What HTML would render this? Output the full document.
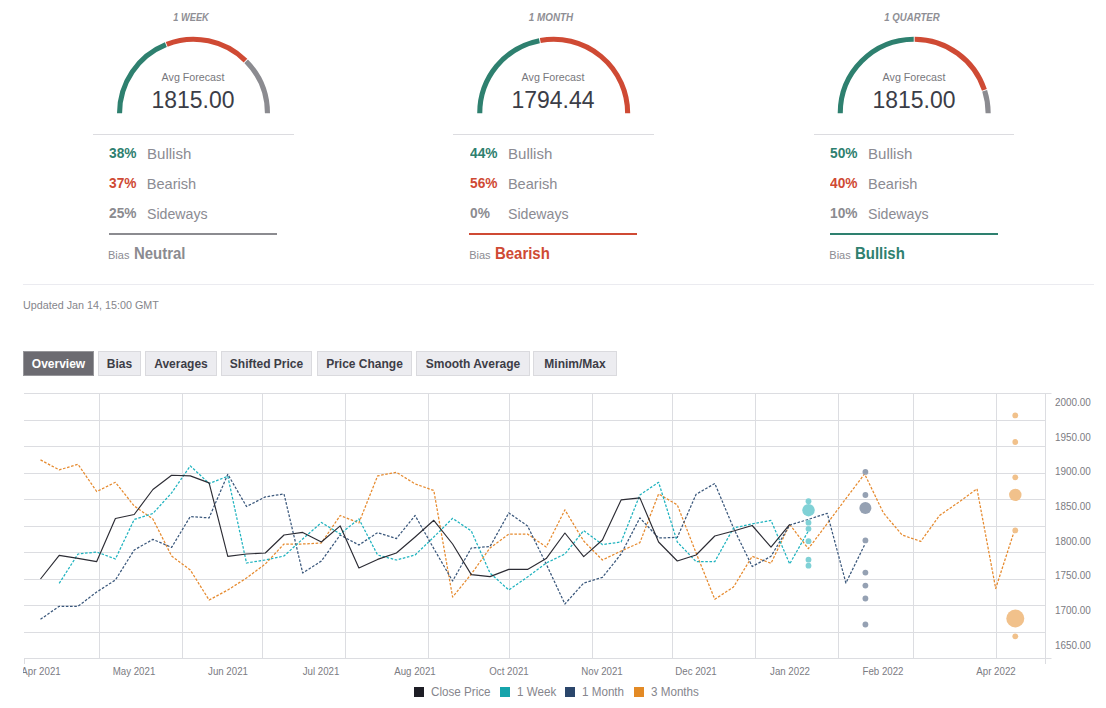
<!DOCTYPE html><html><head><meta charset="utf-8"><style>
html,body{margin:0;padding:0;background:#fff;}
body{width:1106px;height:708px;overflow:hidden;position:relative;font-family:"Liberation Sans", sans-serif;}
.t{position:absolute;white-space:nowrap;line-height:1;}
</style></head><body>
<svg width="1106" height="708" style="position:absolute;left:0;top:0"><path d="M119.55,113.20 A73.95,73.95 0 0 1 165.86,44.61" fill="none" stroke="#2e806f" stroke-width="5.1"/><path d="M166.70,44.28 A73.95,73.95 0 0 1 245.47,60.59" fill="none" stroke="#cf4a34" stroke-width="5.1"/><path d="M246.11,61.23 A73.95,73.95 0 0 1 267.45,113.20" fill="none" stroke="#8b8b90" stroke-width="5.1"/><path d="M479.75,113.20 A73.95,73.95 0 0 1 539.40,40.65" fill="none" stroke="#2e806f" stroke-width="5.1"/><path d="M540.29,40.48 A73.95,73.95 0 0 1 627.65,113.20" fill="none" stroke="#cf4a34" stroke-width="5.1"/><path d="M840.25,113.20 A73.95,73.95 0 0 1 913.75,39.25" fill="none" stroke="#2e806f" stroke-width="5.1"/><path d="M914.65,39.25 A73.95,73.95 0 0 1 984.39,89.92" fill="none" stroke="#cf4a34" stroke-width="5.1"/><path d="M984.67,90.78 A73.95,73.95 0 0 1 988.15,113.20" fill="none" stroke="#8b8b90" stroke-width="5.1"/></svg>
<div class="t" style="left:90.8px;width:200px;text-align:center;top:12.6px;font-size:10.3px;font-style:italic;font-weight:bold;color:#8f8f95;transform:scaleX(0.9)">1 WEEK</div>
<div class="t" style="left:93.1px;width:200px;text-align:center;top:72.3px;font-size:10.8px;color:#77777c;transform:scaleX(0.99)">Avg Forecast</div>
<div class="t" style="left:93.1px;width:200px;text-align:center;top:87.7px;font-size:24.4px;color:#3b3d47;transform:scaleX(0.94)">1815.00</div>
<div style="position:absolute;left:93.0px;top:134px;width:200.5px;height:1px;background:#dcdce0"></div>
<div class="t" style="left:108.9px;top:146.2px;font-size:14.6px;font-weight:bold;color:#2e806f;transform:scaleX(0.94);transform-origin:0 0">38%</div>
<div class="t" style="left:146.7px;top:146.5px;font-size:14.6px;color:#8b8b92;transform:scaleX(1.03);transform-origin:0 0">Bullish</div>
<div class="t" style="left:108.9px;top:176.2px;font-size:14.6px;font-weight:bold;color:#cf4a34;transform:scaleX(0.94);transform-origin:0 0">37%</div>
<div class="t" style="left:146.7px;top:176.5px;font-size:14.6px;color:#8b8b92;transform:scaleX(1.0);transform-origin:0 0">Bearish</div>
<div class="t" style="left:108.9px;top:206.2px;font-size:14.6px;font-weight:bold;color:#8b8b90;transform:scaleX(0.94);transform-origin:0 0">25%</div>
<div class="t" style="left:146.7px;top:206.5px;font-size:14.6px;color:#8b8b92;transform:scaleX(0.97);transform-origin:0 0">Sideways</div>
<div style="position:absolute;left:109.0px;top:233px;width:168px;height:2px;background:#8b8b90"></div>
<div class="t" style="left:108.0px;top:250px;font-size:11px;color:#8b8b92">Bias</div>
<div class="t" style="left:133.5px;top:245.7px;font-size:16.6px;font-weight:bold;color:#8b8b90;transform:scaleX(0.9);transform-origin:0 0">Neutral</div>
<div class="t" style="left:451.00000000000006px;width:200px;text-align:center;top:12.6px;font-size:10.3px;font-style:italic;font-weight:bold;color:#8f8f95;transform:scaleX(0.955)">1 MONTH</div>
<div class="t" style="left:453.30000000000007px;width:200px;text-align:center;top:72.3px;font-size:10.8px;color:#77777c;transform:scaleX(0.99)">Avg Forecast</div>
<div class="t" style="left:453.30000000000007px;width:200px;text-align:center;top:87.7px;font-size:24.4px;color:#3b3d47;transform:scaleX(0.94)">1794.44</div>
<div style="position:absolute;left:453.20000000000005px;top:134px;width:200.5px;height:1px;background:#dcdce0"></div>
<div class="t" style="left:470.1px;top:146.2px;font-size:14.6px;font-weight:bold;color:#2e806f;transform:scaleX(0.94);transform-origin:0 0">44%</div>
<div class="t" style="left:507.90000000000003px;top:146.5px;font-size:14.6px;color:#8b8b92;transform:scaleX(1.03);transform-origin:0 0">Bullish</div>
<div class="t" style="left:470.1px;top:176.2px;font-size:14.6px;font-weight:bold;color:#cf4a34;transform:scaleX(0.94);transform-origin:0 0">56%</div>
<div class="t" style="left:507.90000000000003px;top:176.5px;font-size:14.6px;color:#8b8b92;transform:scaleX(1.0);transform-origin:0 0">Bearish</div>
<div class="t" style="left:470.1px;top:206.2px;font-size:14.6px;font-weight:bold;color:#8b8b90;transform:scaleX(0.94);transform-origin:0 0">0%</div>
<div class="t" style="left:507.90000000000003px;top:206.5px;font-size:14.6px;color:#8b8b92;transform:scaleX(0.97);transform-origin:0 0">Sideways</div>
<div style="position:absolute;left:469.20000000000005px;top:233px;width:168px;height:2px;background:#cf4a34"></div>
<div class="t" style="left:469.20000000000005px;top:250px;font-size:11px;color:#8b8b92">Bias</div>
<div class="t" style="left:494.70000000000005px;top:245.7px;font-size:16.6px;font-weight:bold;color:#cf4a34;transform:scaleX(0.9);transform-origin:0 0">Bearish</div>
<div class="t" style="left:811.5px;width:200px;text-align:center;top:12.6px;font-size:10.3px;font-style:italic;font-weight:bold;color:#8f8f95;transform:scaleX(0.935)">1 QUARTER</div>
<div class="t" style="left:813.8000000000001px;width:200px;text-align:center;top:72.3px;font-size:10.8px;color:#77777c;transform:scaleX(0.99)">Avg Forecast</div>
<div class="t" style="left:813.8000000000001px;width:200px;text-align:center;top:87.7px;font-size:24.4px;color:#3b3d47;transform:scaleX(0.94)">1815.00</div>
<div style="position:absolute;left:813.7px;top:134px;width:200.5px;height:1px;background:#dcdce0"></div>
<div class="t" style="left:830.2px;top:146.2px;font-size:14.6px;font-weight:bold;color:#2e806f;transform:scaleX(0.94);transform-origin:0 0">50%</div>
<div class="t" style="left:868.0000000000001px;top:146.5px;font-size:14.6px;color:#8b8b92;transform:scaleX(1.03);transform-origin:0 0">Bullish</div>
<div class="t" style="left:830.2px;top:176.2px;font-size:14.6px;font-weight:bold;color:#cf4a34;transform:scaleX(0.94);transform-origin:0 0">40%</div>
<div class="t" style="left:868.0000000000001px;top:176.5px;font-size:14.6px;color:#8b8b92;transform:scaleX(1.0);transform-origin:0 0">Bearish</div>
<div class="t" style="left:830.2px;top:206.2px;font-size:14.6px;font-weight:bold;color:#8b8b90;transform:scaleX(0.94);transform-origin:0 0">10%</div>
<div class="t" style="left:868.0000000000001px;top:206.5px;font-size:14.6px;color:#8b8b92;transform:scaleX(0.97);transform-origin:0 0">Sideways</div>
<div style="position:absolute;left:829.7px;top:233px;width:168px;height:2px;background:#2e806f"></div>
<div class="t" style="left:829.3000000000001px;top:250px;font-size:11px;color:#8b8b92">Bias</div>
<div class="t" style="left:854.8000000000001px;top:245.7px;font-size:16.6px;font-weight:bold;color:#2e806f;transform:scaleX(0.9);transform-origin:0 0">Bullish</div>
<div style="position:absolute;left:23px;top:284px;width:1071px;height:1px;background:#ebebf0"></div>
<div class="t" style="left:23px;top:300.05px;font-size:10.5px;color:#85858b;transform:scaleX(1.025);transform-origin:0 0">Updated Jan 14, 15:00 GMT</div>
<div style="position:absolute;left:23px;top:351px;width:69px;height:23px;background:#6c6b71;border:1px solid #96969a;color:#fff;box-sizing:content-box;font-size:12px;font-weight:bold;text-align:center;line-height:25px;white-space:nowrap">Overview</div>
<div style="position:absolute;left:98px;top:351px;width:41px;height:23px;background:#ececf0;border:1px solid #dadade;color:#3d3d47;box-sizing:content-box;font-size:12px;font-weight:bold;text-align:center;line-height:25px;white-space:nowrap">Bias</div>
<div style="position:absolute;left:145px;top:351px;width:70px;height:23px;background:#ececf0;border:1px solid #dadade;color:#3d3d47;box-sizing:content-box;font-size:12px;font-weight:bold;text-align:center;line-height:25px;white-space:nowrap">Averages</div>
<div style="position:absolute;left:221px;top:351px;width:89px;height:23px;background:#ececf0;border:1px solid #dadade;color:#3d3d47;box-sizing:content-box;font-size:12px;font-weight:bold;text-align:center;line-height:25px;white-space:nowrap">Shifted Price</div>
<div style="position:absolute;left:317px;top:351px;width:93px;height:23px;background:#ececf0;border:1px solid #dadade;color:#3d3d47;box-sizing:content-box;font-size:12px;font-weight:bold;text-align:center;line-height:25px;white-space:nowrap">Price Change</div>
<div style="position:absolute;left:416px;top:351px;width:112px;height:23px;background:#ececf0;border:1px solid #dadade;color:#3d3d47;box-sizing:content-box;font-size:12px;font-weight:bold;text-align:center;line-height:25px;white-space:nowrap">Smooth Average</div>
<div style="position:absolute;left:533px;top:351px;width:82px;height:23px;background:#ececf0;border:1px solid #dadade;color:#3d3d47;box-sizing:content-box;font-size:12px;font-weight:bold;text-align:center;line-height:25px;white-space:nowrap">Minim/Max</div>
<svg width="1106" height="708" style="position:absolute;left:0;top:0"><line x1="24" y1="393.5" x2="1051.5" y2="393.5" stroke="#dcdde1" stroke-width="1"/><line x1="24" y1="420.5" x2="1045.5" y2="420.5" stroke="#dcdde1" stroke-width="1"/><line x1="24" y1="446.5" x2="1045.5" y2="446.5" stroke="#dcdde1" stroke-width="1"/><line x1="24" y1="473.5" x2="1045.5" y2="473.5" stroke="#dcdde1" stroke-width="1"/><line x1="24" y1="499.5" x2="1045.5" y2="499.5" stroke="#dcdde1" stroke-width="1"/><line x1="24" y1="526.5" x2="1045.5" y2="526.5" stroke="#dcdde1" stroke-width="1"/><line x1="24" y1="552.5" x2="1045.5" y2="552.5" stroke="#dcdde1" stroke-width="1"/><line x1="24" y1="579.5" x2="1045.5" y2="579.5" stroke="#dcdde1" stroke-width="1"/><line x1="24" y1="605.5" x2="1045.5" y2="605.5" stroke="#dcdde1" stroke-width="1"/><line x1="24" y1="632.5" x2="1045.5" y2="632.5" stroke="#dcdde1" stroke-width="1"/><line x1="24" y1="658.5" x2="1051.5" y2="658.5" stroke="#dcdde1" stroke-width="1"/><line x1="99.5" y1="393" x2="99.5" y2="658" stroke="#dcdde1" stroke-width="1"/><line x1="182.5" y1="393" x2="182.5" y2="658" stroke="#dcdde1" stroke-width="1"/><line x1="262.5" y1="393" x2="262.5" y2="658" stroke="#dcdde1" stroke-width="1"/><line x1="345.5" y1="393" x2="345.5" y2="658" stroke="#dcdde1" stroke-width="1"/><line x1="428.5" y1="393" x2="428.5" y2="658" stroke="#dcdde1" stroke-width="1"/><line x1="509.5" y1="393" x2="509.5" y2="658" stroke="#dcdde1" stroke-width="1"/><line x1="592.5" y1="393" x2="592.5" y2="658" stroke="#dcdde1" stroke-width="1"/><line x1="672.5" y1="393" x2="672.5" y2="658" stroke="#dcdde1" stroke-width="1"/><line x1="755.5" y1="393" x2="755.5" y2="658" stroke="#dcdde1" stroke-width="1"/><line x1="838.5" y1="393" x2="838.5" y2="658" stroke="#dcdde1" stroke-width="1"/><line x1="913.5" y1="393" x2="913.5" y2="658" stroke="#dcdde1" stroke-width="1"/><line x1="996.5" y1="393" x2="996.5" y2="658" stroke="#dcdde1" stroke-width="1"/><line x1="1045.5" y1="393" x2="1045.5" y2="664" stroke="#dcdde1" stroke-width="1"/><line x1="24.5" y1="658" x2="24.5" y2="664" stroke="#dcdde1" stroke-width="1"/><polyline points="40.5,459.9 59.2,469.9 78.0,464.3 96.7,491.5 115.4,482.3 134.2,506.0 152.9,519.0 171.6,556.0 190.3,570.0 209.1,600.0 227.8,590.0 246.5,578.0 265.3,564.0 284.0,544.0 302.7,544.0 321.4,543.0 340.2,515.5 358.9,522.9 377.6,475.9 396.4,472.3 415.1,483.9 433.8,490.5 452.6,597.0 471.3,574.0 490.0,548.0 508.8,534.0 527.5,534.0 546.2,547.0 564.9,509.9 583.7,541.0 602.4,560.0 621.1,551.0 639.9,542.6 658.6,493.9 677.3,504.9 696.1,553.0 714.8,599.3 733.5,587.0 752.2,556.3 771.0,563.3 789.7,524.5 808.4,548.7 827.2,523.6 845.9,498.6 864.6,473.9 883.4,512.9 902.1,535.0 920.8,541.4 939.5,515.5 958.3,502.5 977.0,488.9 995.7,588.5 1014.5,530.4" fill="none" stroke="#e68a2e" stroke-width="1.25" stroke-dasharray="2.6 1.6" stroke-linejoin="round"/><polyline points="40.5,619.3 59.2,606.3 78.0,606.3 96.7,592.0 115.4,580.0 134.2,550.0 152.9,539.4 171.6,547.4 190.3,516.5 209.1,517.9 227.8,474.3 246.5,506.5 265.3,496.9 284.0,493.9 302.7,573.0 321.4,561.0 340.2,535.0 358.9,545.0 377.6,532.6 396.4,538.6 415.1,515.5 433.8,548.6 452.6,581.0 471.3,548.0 490.0,546.6 508.8,512.9 527.5,525.9 546.2,564.0 564.9,604.0 583.7,583.0 602.4,577.4 621.1,554.0 639.9,517.9 658.6,538.0 677.3,537.4 696.1,494.3 714.8,483.5 733.5,528.0 752.2,566.5 771.0,556.3 789.7,525.1 808.4,519.4 827.2,513.3 845.9,583.0 864.6,544.9" fill="none" stroke="#3b587c" stroke-width="1.25" stroke-dasharray="2.6 1.6" stroke-linejoin="round"/><polyline points="59.2,583.4 78.0,554.0 96.7,552.0 115.4,559.0 134.2,519.5 152.9,513.5 171.6,492.9 190.3,465.9 209.1,483.5 227.8,476.3 246.5,563.0 265.3,560.0 284.0,556.0 302.7,539.0 321.4,522.5 340.2,534.0 358.9,518.9 377.6,555.0 396.4,560.0 415.1,555.0 433.8,537.0 452.6,518.3 471.3,531.0 490.0,573.0 508.8,590.0 527.5,577.0 546.2,563.0 564.9,554.0 583.7,530.6 602.4,544.6 621.1,542.0 639.9,494.9 658.6,482.3 677.3,542.0 696.1,561.6 714.8,561.6 733.5,528.0 752.2,523.9 771.0,520.4 789.7,563.9 808.4,530.9" fill="none" stroke="#1fb3bf" stroke-width="1.25" stroke-dasharray="2.6 1.6" stroke-linejoin="round"/><polyline points="40.5,579.0 59.2,555.4 78.0,558.4 96.7,561.6 115.4,518.5 134.2,514.5 152.9,489.5 171.6,475.3 190.3,475.9 209.1,482.9 227.8,556.4 246.5,554.0 265.3,553.0 284.0,535.0 302.7,532.4 321.4,542.0 340.2,525.9 358.9,568.0 377.6,559.4 396.4,553.0 415.1,537.0 433.8,520.3 452.6,544.0 471.3,574.6 490.0,576.6 508.8,569.4 527.5,569.4 546.2,558.6 564.9,533.0 583.7,556.6 602.4,540.0 621.1,499.9 639.9,497.9 658.6,542.0 677.3,561.0 696.1,555.0 714.8,536.0 733.5,531.0 752.2,525.5 771.0,547.1 789.7,524.3" fill="none" stroke="#2c2c34" stroke-width="1.15" stroke-linejoin="round"/><circle cx="808.5" cy="501.2" r="2.9" fill="#80d1d6"/><circle cx="808.5" cy="510.2" r="6.2" fill="#80d1d6"/><circle cx="808.5" cy="522.7" r="2.9" fill="#80d1d6"/><circle cx="808.5" cy="528.8" r="2.9" fill="#80d1d6"/><circle cx="808.5" cy="541.2" r="2.9" fill="#80d1d6"/><circle cx="808.5" cy="559.7" r="2.9" fill="#80d1d6"/><circle cx="808.5" cy="565.7" r="2.9" fill="#80d1d6"/><circle cx="865.4" cy="471.9" r="2.9" fill="#95a1b3"/><circle cx="865.4" cy="495" r="2.9" fill="#95a1b3"/><circle cx="865.4" cy="508" r="6.0" fill="#95a1b3"/><circle cx="865.4" cy="540.4" r="2.9" fill="#95a1b3"/><circle cx="865.4" cy="572.6" r="2.9" fill="#95a1b3"/><circle cx="865.4" cy="585.6" r="2.9" fill="#95a1b3"/><circle cx="865.4" cy="598.5" r="2.9" fill="#95a1b3"/><circle cx="865.4" cy="624.5" r="2.9" fill="#95a1b3"/><circle cx="1015.3" cy="415.4" r="2.9" fill="#f1c18b"/><circle cx="1015.3" cy="442" r="2.9" fill="#f1c18b"/><circle cx="1015.3" cy="477.3" r="2.9" fill="#f1c18b"/><circle cx="1015.3" cy="494.9" r="6.2" fill="#f1c18b"/><circle cx="1015.3" cy="530.4" r="2.9" fill="#f1c18b"/><circle cx="1015.3" cy="618.5" r="9" fill="#f1c18b"/><circle cx="1015.3" cy="636.3" r="2.9" fill="#f1c18b"/></svg>
<div class="t" style="left:1055px;top:397.9px;font-size:10px;color:#7b7b82;transform:scaleX(0.99);transform-origin:0 0">2000.00</div>
<div class="t" style="left:1055px;top:432.6px;font-size:10px;color:#7b7b82;transform:scaleX(0.99);transform-origin:0 0">1950.00</div>
<div class="t" style="left:1055px;top:467.3px;font-size:10px;color:#7b7b82;transform:scaleX(0.99);transform-origin:0 0">1900.00</div>
<div class="t" style="left:1055px;top:502.0px;font-size:10px;color:#7b7b82;transform:scaleX(0.99);transform-origin:0 0">1850.00</div>
<div class="t" style="left:1055px;top:536.7px;font-size:10px;color:#7b7b82;transform:scaleX(0.99);transform-origin:0 0">1800.00</div>
<div class="t" style="left:1055px;top:571.4px;font-size:10px;color:#7b7b82;transform:scaleX(0.99);transform-origin:0 0">1750.00</div>
<div class="t" style="left:1055px;top:606.1px;font-size:10px;color:#7b7b82;transform:scaleX(0.99);transform-origin:0 0">1700.00</div>
<div class="t" style="left:1055px;top:640.8px;font-size:10px;color:#7b7b82;transform:scaleX(0.99);transform-origin:0 0">1650.00</div>
<div style="position:absolute;left:23px;top:660px;width:1083px;height:30px;overflow:hidden">
<div class="t" style="left:-32.5px;width:100px;text-align:center;top:7.25px;font-size:10px;color:#7b7b82;transform:scaleX(0.97)">Apr 2021</div>
<div class="t" style="left:61.2px;width:100px;text-align:center;top:7.25px;font-size:10px;color:#7b7b82;transform:scaleX(0.97)">May 2021</div>
<div class="t" style="left:154.8px;width:100px;text-align:center;top:7.25px;font-size:10px;color:#7b7b82;transform:scaleX(0.97)">Jun 2021</div>
<div class="t" style="left:248.4px;width:100px;text-align:center;top:7.25px;font-size:10px;color:#7b7b82;transform:scaleX(0.97)">Jul 2021</div>
<div class="t" style="left:342.1px;width:100px;text-align:center;top:7.25px;font-size:10px;color:#7b7b82;transform:scaleX(0.97)">Aug 2021</div>
<div class="t" style="left:435.8px;width:100px;text-align:center;top:7.25px;font-size:10px;color:#7b7b82;transform:scaleX(0.97)">Oct 2021</div>
<div class="t" style="left:529.4px;width:100px;text-align:center;top:7.25px;font-size:10px;color:#7b7b82;transform:scaleX(0.97)">Nov 2021</div>
<div class="t" style="left:623.1px;width:100px;text-align:center;top:7.25px;font-size:10px;color:#7b7b82;transform:scaleX(0.97)">Dec 2021</div>
<div class="t" style="left:716.7px;width:100px;text-align:center;top:7.25px;font-size:10px;color:#7b7b82;transform:scaleX(0.97)">Jan 2022</div>
<div class="t" style="left:810.4px;width:100px;text-align:center;top:7.25px;font-size:10px;color:#7b7b82;transform:scaleX(0.97)">Feb 2022</div>
<div class="t" style="left:922.7px;width:100px;text-align:center;top:7.25px;font-size:10px;color:#7b7b82;transform:scaleX(0.97)">Apr 2022</div>
</div>
<div style="position:absolute;left:414px;top:687px;width:10px;height:10px;background:#1d1d25"></div>
<div class="t" style="left:430.5px;top:686.3px;font-size:12px;color:#85858c;transform:scaleX(0.97);transform-origin:0 0">Close Price</div>
<div style="position:absolute;left:500px;top:687px;width:10px;height:10px;background:#16a4ab"></div>
<div class="t" style="left:516.7px;top:686.3px;font-size:12px;color:#85858c;transform:scaleX(0.97);transform-origin:0 0">1 Week</div>
<div style="position:absolute;left:565px;top:687px;width:10px;height:10px;background:#2b466b"></div>
<div class="t" style="left:581.5px;top:686.3px;font-size:12px;color:#85858c;transform:scaleX(0.97);transform-origin:0 0">1 Month</div>
<div style="position:absolute;left:634px;top:687px;width:10px;height:10px;background:#e38a25"></div>
<div class="t" style="left:650.5px;top:686.3px;font-size:12px;color:#85858c;transform:scaleX(0.97);transform-origin:0 0">3 Months</div>
</body></html>
